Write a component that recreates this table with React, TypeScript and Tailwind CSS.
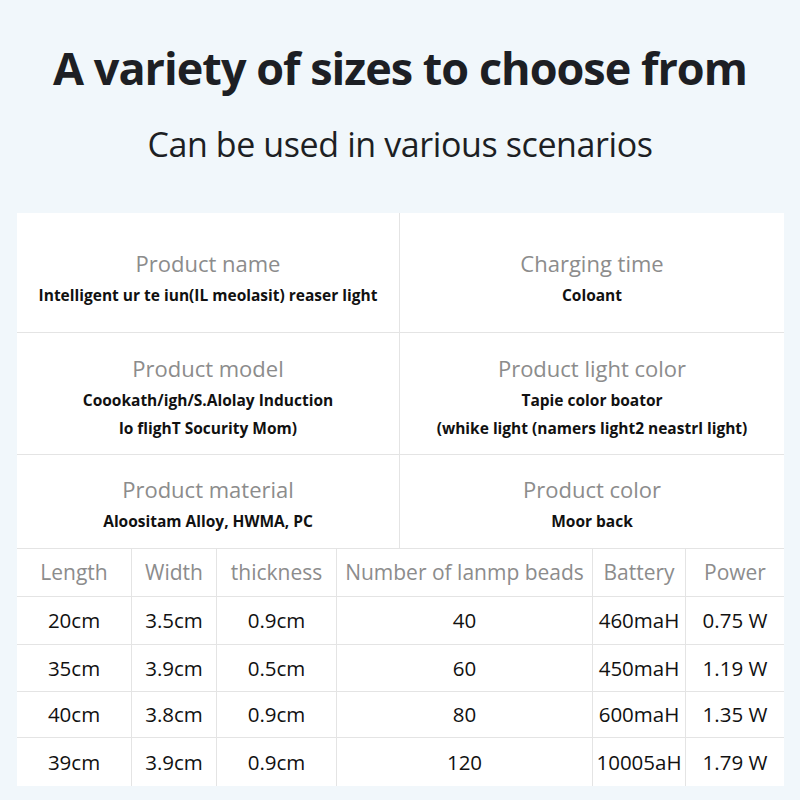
import React from "react";

const specs = [
  { label: "Product name", lines: ["Intelligent ur te iun(IL meolasit) reaser light"] },
  { label: "Charging time", lines: ["Coloant"] },
  { label: "Product model", lines: ["Coookath/igh/S.Alolay Induction", "lo flighT Socurity Mom)"] },
  { label: "Product light color", lines: ["Tapie color boator", "(whike light (namers light2 neastrl light)"] },
  { label: "Product material", lines: ["Aloositam Alloy, HWMA, PC"] },
  { label: "Product color", lines: ["Moor back"] },
];

const heads = ["Length", "Width", "thickness", "Number of lanmp beads", "Battery", "Power"];
const widths = ["w-[115px]", "w-[85px]", "w-[120px]", "w-[256px]", "w-[93px]", "w-[98px]"];

const rows = [
  ["20cm", "3.5cm", "0.9cm", "40", "460maH", "0.75 W"],
  ["35cm", "3.9cm", "0.5cm", "60", "450maH", "1.19 W"],
  ["40cm", "3.8cm", "0.9cm", "80", "600maH", "1.35 W"],
  ["39cm", "3.9cm", "0.9cm", "120", "10005aH", "1.79 W"],
];

const rowHeights = ["h-[48px]", "h-[47px]", "h-[46px]", "h-[48px]"];
const specHeights = ["h-[120px]", "h-[122px]", "h-[94px]"];
const specPad = ["pt-[12px]", "pt-[8px]", "pt-[6px]"];

export default function App() {
  return (
    <div className="w-[800px] h-[800px] bg-[#f1f7fb] font-['Open_Sans',sans-serif] text-[#1d1f24]">
      <h1 className="pt-[42px] text-center text-[45px] leading-[52px] font-bold tracking-[-1px]">
        A variety of sizes to choose from
      </h1>
      <p className="mt-[30px] text-center text-[34px] leading-[40px] tracking-[-0.4px]">
        Can be used in various scenarios
      </p>

      <div className="mx-[17px] mt-[49px] w-[767px] bg-white">
        {[0, 1, 2].map((r) => (
          <div key={r} className={`grid grid-cols-[383px_384px] border-b border-[#e4e4e4] ${specHeights[r]}`}>
            {[0, 1].map((c) => {
              const s = specs[r * 2 + c];
              return (
                <div
                  key={c}
                  className={`flex flex-col items-center justify-center text-center ${specPad[r]} ${c === 0 ? "border-r border-[#e4e4e4]" : ""}`}
                >
                  <div className="text-[22px] leading-[28px] text-[#8c8c8c]">{s.label}</div>
                  <div className="mt-[4px] text-[15.5px] leading-[28px] font-bold text-[#111]">
                    {s.lines.map((l) => (
                      <div key={l}>{l}</div>
                    ))}
                  </div>
                </div>
              );
            })}
          </div>
        ))}

        <div className="flex h-[48px] border-b border-[#e4e4e4]">
          {heads.map((h, i) => (
            <div
              key={h}
              className={`${widths[i]} flex items-center justify-center text-[21px] text-[#8c8c8c] ${i < 5 ? "border-r border-[#e4e4e4]" : ""}`}
            >
              {h}
            </div>
          ))}
        </div>
        {rows.map((row, r) => (
          <div key={r} className={`flex ${rowHeights[r]} ${r < 3 ? "border-b border-[#e4e4e4]" : ""}`}>
            {row.map((v, i) => (
              <div
                key={i}
                className={`${widths[i]} flex items-center justify-center text-[20.5px] font-medium text-[#111] ${i < 5 ? "border-r border-[#e4e4e4]" : ""}`}
              >
                {v}
              </div>
            ))}
          </div>
        ))}
      </div>
    </div>
  );
}
